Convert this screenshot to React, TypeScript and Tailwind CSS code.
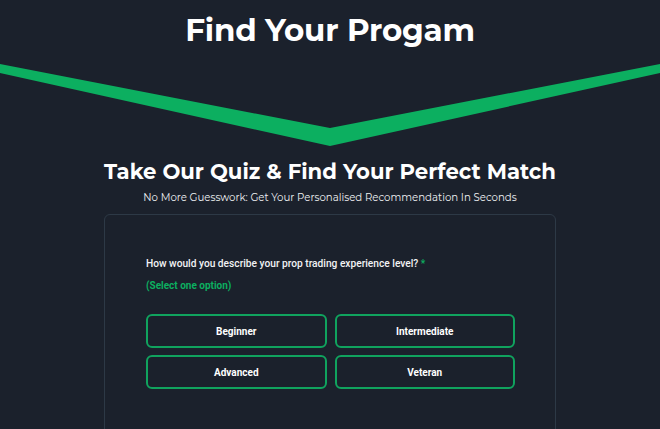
import React, { useState } from 'react';

const OPTIONS = ['Beginner', 'Intermediate', 'Advanced', 'Veteran'];

export default function App() {
  const [picked, setPicked] = useState<string | null>(null);

  return (
    <div className="h-screen bg-[#1b212c] text-white font-['Montserrat','Noto_Sans',sans-serif] overflow-hidden">
      {/* Hero title */}
      <header className="pt-[10px] flex justify-center">
        <h1 className="text-[31px] leading-[40px] font-bold tracking-[-0.2px]">Find Your Progam</h1>
      </header>

      {/* Green chevron band */}
      <svg viewBox="0 0 660 84" width="660" height="84" className="block mt-[14px]" preserveAspectRatio="none">
        <polygon points="0,0 330,64 660,0 660,9 330,82 0,9" fill="#0caf60" />
      </svg>

      <section className="flex flex-col items-center mt-[9px]">
        <h2 className="text-[21.2px] leading-[28px] font-bold">Take Our Quiz &amp; Find Your Perfect Match</h2>
        <p className="mt-[6px] text-[10.2px] leading-[14px] text-[#eef0f2]">
          No More Guesswork: Get Your Personalised Recommendation In Seconds
        </p>

        <div className="mt-[9px] w-[452px] h-[240px] border border-[#2d3946] rounded-[6px] px-[41px] pt-[42px] font-['Roboto',sans-serif]">
          <p className="text-[10.2px] leading-[14px] font-medium text-[#f2f3f5]">
            How would you describe your prop trading experience level? <span className="text-[#0caf60]">*</span>
          </p>
          <p className="mt-[8px] text-[10px] leading-[14px] font-bold text-[#0caf60]">(Select one option)</p>

          <div className="mt-[21px] grid grid-cols-2 gap-x-[8px] gap-y-[7px] w-[369px]">
            {OPTIONS.map((o) => (
              <button
                key={o}
                onClick={() => setPicked(o)}
                className={`h-[34px] rounded-[6px] border-2 border-[#10a35e] text-[10px] font-bold text-white ${
                  picked === o ? 'bg-[#10a35e]' : 'bg-transparent'
                }`}
              >
                {o}
              </button>
            ))}
          </div>
        </div>
      </section>
    </div>
  );
}
